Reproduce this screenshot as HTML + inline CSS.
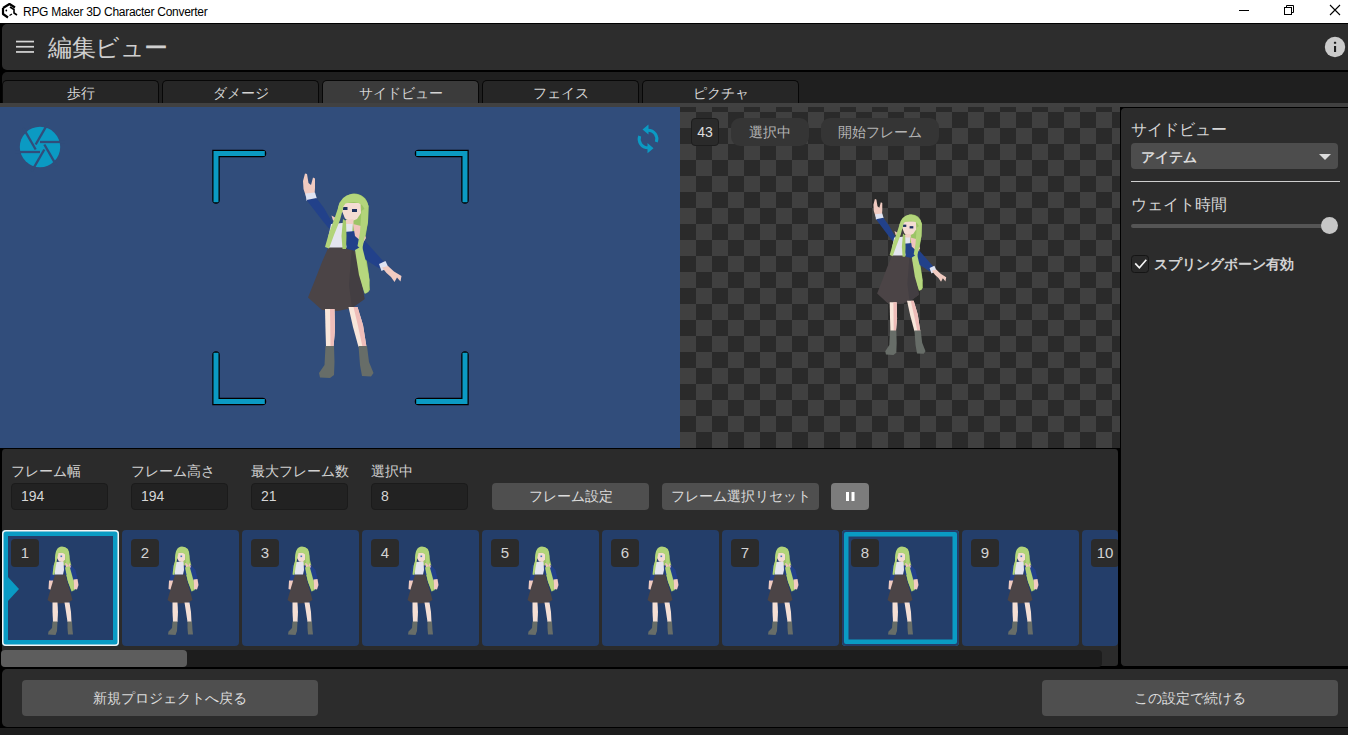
<!DOCTYPE html>
<html><head><meta charset="utf-8">
<style>
*{box-sizing:border-box;margin:0;padding:0}
html,body{width:1348px;height:735px;overflow:hidden;background:#000;font-family:"Liberation Sans",sans-serif;color:#d0d0d0}
.a{position:absolute}
#title{left:0;top:0;width:1348px;height:23px;background:#fff;color:#000;font-size:12px}
#hdr{left:2px;top:24px;width:1360px;height:46px;background:#2d2d2d;border-radius:5px}
#tabbar{left:2px;top:72px;width:1350px;height:31px;background:#1f1f1f;border-radius:5px 0 0 0}
.tab{top:80px;height:23px;width:157px;background:#262626;border:1.5px solid #070707;border-bottom:none;border-radius:5px 5px 0 0;font-size:14px;text-align:center;line-height:24px;color:#d4d4d4}
.tab.on{background:#3b3b3b}
#strip{left:0;top:103px;width:1348px;height:4px;background:#414141}
#prev{left:0;top:107px;width:680px;height:341px;background:#314d7b;overflow:hidden}
#check{left:680px;top:107px;width:440px;height:341px;overflow:hidden;
 background-color:#2a2a2a;
 background-image:linear-gradient(45deg,#404040 25%,transparent 25%,transparent 75%,#404040 75%),linear-gradient(45deg,#404040 25%,transparent 25%,transparent 75%,#404040 75%);
 background-size:32px 32px;background-position:0 -11px,16px 5px}
#rpanel{left:1120px;top:107px;width:240px;height:560px;background:#2c2c2c;border:1.5px solid #000;border-right:none;border-radius:5px}
#fpanel{left:0px;top:448px;width:1119.5px;height:220px;background:#2b2b2b;border:2px solid #000;border-top:1.5px solid #000;border-radius:5px}
#bpanel{left:2px;top:669px;width:1360px;height:58px;background:#2c2c2c;border-radius:5px}
.lbl{font-size:14px;color:#d2d2d2}
.inp{height:27px;width:97px;background:#222;border:1px solid #1b1b1b;border-radius:4px;font-size:14px;padding-left:9px;line-height:25px;color:#d6d6d6}
.btn{background:#4f4f4f;border-radius:4px;font-size:14px;text-align:center;color:#dcdcdc}
.th{top:0;width:117px;height:116px;background:#243e6a;border-radius:4px;overflow:hidden}
.badge{left:9px;top:9px;width:28px;height:28px;background:#2b2b2b;border-radius:4px;font-size:15px;text-align:center;line-height:28px;color:#d4d4d4}
</style></head><body>
<svg width="0" height="0" style="position:absolute"><defs><symbol id="poseB" viewBox="0 0 117 116">
  <path d="M54 22 Q59 15 66 19 L68 30 L70.5 40 L72.5 50 L73 60 L69.5 61.5 L65.5 50 L62.5 38 Z" fill="#9cc466"/>
  <path d="M50 35 L55 34 L55 48 L52.5 51.5 L48 51 L48.5 44 Z" fill="#22418a"/>
  <path d="M47 50.5 L51.5 50.5 L51.5 56 L49.5 60 L46.5 59 Z" fill="#f1cbc1"/>
  <path d="M61 35.5 L69 35 L73.5 40 L75.5 49.5 L72 51 L69 45 L63 45 Z" fill="#22418a"/>
  <path d="M71.5 49.5 L75.5 49 L76.5 55 L75 59.5 L72 59 Z" fill="#f1cbc1"/>
  <path d="M53 44.5 L63 44.5 L66.5 56 L70.5 70 L65 73 L55 73.5 L49 72.5 L45.5 70 L49.5 56 Z" fill="#4b4446"/>
  <path d="M50.5 72.5 L55.5 72.5 L56 82 L55.5 92 L51 92 L50.5 82 Z" fill="#f5dfd4"/>
  <path d="M62.5 72.5 L67.5 72.5 L69 82 L69.5 92 L65.5 92 L64 82 Z" fill="#f5dfd4"/>
  <path d="M50.5 91.5 L55.5 91.5 L55 101 L53.5 105 L46 104.5 L46.5 101.5 L50 98 Z" fill="#676d68"/>
  <path d="M65.5 91.5 L70 91.5 L70.5 100 L71 104.5 L66 104.5 L65.5 98 Z" fill="#676d68"/>
  <path d="M53 32 L61.5 31.5 L62 40 L61 44.5 L53 44.5 L52 39 Z" fill="#e4e5ef"/>
  <path d="M63 33 L68 33.5 L69 37.5 L64 37.5 Z" fill="#f0c4bc"/>
  <path d="M55 23 L63 22.5 L63 29.5 L60.5 32 L57 31.5 L55 28 Z" fill="#f4dcd3"/>
  <rect x="58.5" y="25.5" width="1.6" height="1.6" fill="#3d7ac0"/>
  <path d="M53 31 Q52.5 16.5 60 16.5 Q67.5 17 67.5 26 L67 36 L64 33 L63 24.5 Q60 21.5 56.5 23 L55 30 L53.5 38 L52.5 45 L50.5 44.5 L51.5 36 Z" fill="#b2d47a"/>
  <path d="M63 37.5 L67.5 36 L70.5 47 L72 58 L70 61.5 L66 52 Z" fill="#b2d47a"/>
</symbol></defs></svg>
<div id="title" class="a">
  <svg class="a" style="left:0;top:0" width="22" height="22" viewBox="0 0 22 22">
  <path d="M3 8 L9.5 4 L15 7.5 M3 8 L3 14 L8 17.5" fill="none" stroke="#000" stroke-width="2.2" stroke-linejoin="round"/>
  <path d="M10 7 L14 9.5 L14 13 L17 15" fill="none" stroke="#000" stroke-width="1.6"/>
  <path d="M9.5 15.5 L12 14" fill="none" stroke="#000" stroke-width="1.2"/>
  <circle cx="6.3" cy="10.5" r="0.9" fill="#000"/>
</svg>
<div class="a" style="left:23px;top:5px;line-height:14px;letter-spacing:-0.28px">RPG Maker 3D Character Converter</div>
<svg class="a" style="left:1230px;top:0" width="118" height="22">
  <rect x="9" y="10" width="10" height="1" fill="#000"/>
  <rect x="54.5" y="7.5" width="7" height="7" fill="none" stroke="#000" stroke-width="1"/>
  <path d="M56.5 7.5 V5.5 H63.5 V12.5 H61.5" fill="none" stroke="#000" stroke-width="1"/>
  <path d="M100 5 L110 15 M110 5 L100 15" stroke="#000" stroke-width="1.1"/>
</svg>
</div>
<div id="hdr" class="a"></div>
<div class="a" style="left:48px;top:34px;font-size:24px;line-height:28px;color:#cfcfcf;letter-spacing:-0.5px">編集ビュー</div>
<svg class="a" style="left:14px;top:38px" width="24" height="18">
  <rect x="2" y="2.7" width="18" height="1.7" fill="#d6d6d6"/>
  <rect x="2" y="7.9" width="18" height="1.7" fill="#d6d6d6"/>
  <rect x="2" y="13.1" width="18" height="1.7" fill="#d6d6d6"/>
</svg>
<svg class="a" style="left:1323px;top:35px" width="24" height="24" viewBox="0 0 24 24">
  <circle cx="12" cy="12" r="10.2" fill="#cbcbcb"/>
  <rect x="11" y="11" width="2.1" height="6" fill="#1e1e1e"/>
  <rect x="10.9" y="6.8" width="2.3" height="2" rx="0.6" fill="#1e1e1e"/>
</svg>
<div id="tabbar" class="a"></div>
<div class="a tab" style="left:2px">歩行</div>
<div class="a tab" style="left:162px">ダメージ</div>
<div class="a tab on" style="left:322px">サイドビュー</div>
<div class="a tab" style="left:482px">フェイス</div>
<div class="a tab" style="left:642px">ピクチャ</div>
<div id="strip" class="a"></div>
<div id="prev" class="a">
<svg class="a" style="left:0;top:0" width="680" height="341" viewBox="0 107 680 341">
  <g>
    <circle cx="40" cy="147" r="20.2" fill="#0b9ac3"/>
    <g stroke="#314d7b" stroke-width="2.3" id="ap"><line x1="40.00" y1="152.00" x2="15.00" y2="152.00"/><line x1="35.67" y1="149.50" x2="23.17" y2="127.85"/><line x1="35.67" y1="144.50" x2="48.17" y2="122.85"/><line x1="40.00" y1="142.00" x2="65.00" y2="142.00"/><line x1="44.33" y1="144.50" x2="56.83" y2="166.15"/><line x1="44.33" y1="149.50" x2="31.83" y2="171.15"/></g>
  </g>
  <g fill="none" stroke="#0b9ac3" stroke-width="3">
    <path d="M648 130.2 A8.8 8.8 0 0 1 656.3 142"/>
    <path d="M648 147.8 A8.8 8.8 0 0 1 639.7 136"/>
  </g>
  <path d="M648.5 124.5 L648.5 134.5 L642.5 129.5Z M647.5 143 L647.5 153.3 L653.5 148.2Z" fill="#0b9ac3"/>
  <g id="poseA">
  <!-- back long hair -->
  <path d="M340 206 Q343 195 354 193.5 Q366 194 368.5 206 L368 222 L365 240 L366 256 L369 275 L370 290 L365.5 294 L360 280 L355 262 L351 246 L352 232 Z" fill="#9cc466"/>
  <!-- raised arm -->
  <path d="M303 181 L305 173.5 L307 174 L308.5 183 L311 185 L313 177.5 L315 178.5 L315 188 L314.5 195 L306 196.5 L303.5 189 Z" fill="#f1cbc1"/>
  <path d="M305.5 193.5 L315 192.5 L317 199 L306.5 201 Z" fill="#dfe3f2"/>
  <path d="M306.5 200 L316.5 198 L324 208 L332 222 L336 228 L328.5 228 L322 220 Z" fill="#22418a"/>
  <!-- right arm -->
  <path d="M346 231 L357 232 L384 262 L379.5 268.5 L350 250 Z" fill="#22418a"/>
  <path d="M379 264 L385.5 261 L388.5 267.5 L381.5 271 Z" fill="#dfe3f2"/>
  <path d="M382 267.5 L388 266 L394 271.5 L401.5 276 L400.5 281.5 L397 277.5 L394.5 282 L391 277 L386.5 273 Z" fill="#f1cbc1"/>
  <!-- skirt -->
  <path d="M329 246 L354 246 L360 270 L364.5 299 L352 308 L338 311 L322 310 L308 297.5 L315 280 L322 262 Z" fill="#4b4446"/>
  <path d="M352 246 L359 270 L364.5 299 L352 308 L349 285 Z" fill="#433e42"/>
  <!-- legs -->
  <path d="M325 309 L334.5 309 L335 330 L333.5 347 L326 347 L325.5 330 Z" fill="#f8e6da"/>
  <path d="M330 309 L334.5 309 L335 330 L333.5 347 L330.5 347 Z" fill="#efbdb9"/>
  <path d="M348.5 307 L357.5 307 L363 325 L366.5 347 L358.5 347 L353 327 Z" fill="#f8e6da"/>
  <path d="M353.5 307 L357.5 307 L363 325 L366.5 347 L362.5 347 L358 326 Z" fill="#efbdb9"/>
  <!-- boots -->
  <path d="M325.5 346 L334 346 L334.5 362 L334 375 L330 378 L320 377.5 L319 373 L324.5 365 Z" fill="#676d68"/>
  <path d="M358.5 346 L367 346 L369 362 L373.5 373 L371 376.5 L362 376 L360 365 Z" fill="#676d68"/>
  <!-- torso -->
  <path d="M331 224 L353 222 L352 236 L347.5 247.5 L329 247.5 L328.5 236 Z" fill="#e4e5ef"/>
  <path d="M343.5 232 L356 231 L360 242 L356 251 L347 249 Z" fill="#22418a"/>
  <path d="M353 224 L361 226 L366 238 L363 243 L355 236 Z" fill="#f0c4bc"/>
  <path d="M331.5 215.5 L336 218 L337.5 221.5 L333 220.5 Z" fill="#f0c4bc"/>
  <!-- face -->
  <path d="M342 203 L360.5 203 L361 213 L357 219 L351 221.5 L345 218.5 L342 211 Z" fill="#f4dcd3"/>
  <path d="M345.5 220 L353.5 219 L353.5 224 L346 224 Z" fill="#f0cfc6"/>
  <rect x="343" y="207" width="4.5" height="3" fill="#1e3160"/>
  <rect x="352" y="209" width="5" height="3" fill="#1e3160"/>
  <!-- front hair -->
  <path d="M338 208 Q340 196 352 193.8 Q365 194 368.5 206 L366 211 L362 205 Q356 200.5 350 202.5 L345.5 203.5 L341.5 209 Z" fill="#b4d67c"/>
  <path d="M339 205 L343.5 207 L340 220 L334 235 L329 248.5 L325 247 L329 233 L335 217 Z" fill="#b2d47a"/>
  <path d="M343 219 L346 221 L346.5 236 L346 249 L342.5 249 L341.5 236 Z" fill="#a6cb6e"/>
  <path d="M361.5 211 L368.5 206 L368 222 L364.5 238 L362 250 L357.5 246 L360 232 Z" fill="#b2d47a"/>
  <path d="M355 250 L362 246 L366 262 L369.5 280 L368.5 292 L364.5 293.5 L359 275 Z" fill="#b6d77e"/>
</g>
  <g id="brk" fill="none" stroke-linecap="round" stroke-linejoin="miter">
    <path d="M216 200 V153.5 H262.5 M465 200 V153.5 H418.5 M216 355 V401.5 H262.5 M465 355 V401.5 H418.5" stroke="#000" stroke-width="7.5"/>
    <path d="M216 202.3 V153.5 H264.8 M465 202.3 V153.5 H416.2 M216 352.7 V401.5 H264.8 M465 352.7 V401.5 H416.2" stroke="#0b9ac3" stroke-width="5" stroke-linecap="butt"/>
  </g>
</svg>
</div>
<div id="check" class="a">
  <svg class="a" style="left:0;top:0" width="440" height="341" viewBox="680 107 440 341"><use href="#poseA" transform="translate(649.5 66.9) scale(0.739 0.762)"/></svg>
  <div class="a" style="left:11px;top:11px;width:28px;height:28px;background:#2a2a2a;border:1px solid #1d1d1d;border-radius:4px;font-size:14px;line-height:26px;text-align:center;color:#dedede">43</div>
  <div class="a" style="left:51px;top:11px;width:78px;height:28px;background:#353535;border-radius:9px;font-size:14px;line-height:28px;text-align:center;color:#b4b4b4">選択中</div>
  <div class="a" style="left:141px;top:11px;width:118px;height:28px;background:#353535;border-radius:9px;font-size:14px;line-height:28px;text-align:center;color:#b4b4b4">開始フレーム</div>
</div>
<div id="rpanel" class="a"></div>
<div class="a" style="left:1131px;top:120px;font-size:16px;line-height:20px;color:#d6d6d6">サイドビュー</div>
<div class="a" style="left:1131px;top:143px;width:207px;height:26px;background:#4d4d4d;border-radius:4px"></div>
<div class="a" style="left:1141px;top:147px;font-size:14px;line-height:20px;color:#dadada;font-weight:bold">アイテム</div>
<svg class="a" style="left:1318px;top:153px" width="14" height="8"><path d="M1 1 H13 L7 7Z" fill="#dcdcdc"/></svg>
<div class="a" style="left:1131px;top:181px;width:209px;height:1px;background:#cfcfcf"></div>
<div class="a" style="left:1131px;top:195px;font-size:16px;line-height:20px;color:#d6d6d6">ウェイト時間</div>
<div class="a" style="left:1131px;top:224px;width:200px;height:4px;background:#555;border-radius:2px"></div>
<div class="a" style="left:1321px;top:217px;width:17px;height:17px;background:#c6c6c6;border-radius:50%"></div>
<div class="a" style="left:1131px;top:255px;width:18px;height:18px;background:#292929;border:1.5px solid #151515;border-radius:3.5px"></div>
<svg class="a" style="left:1131px;top:255px" width="18" height="18"><path d="M4.2 8.3 L8.4 12.8 L15.3 4.8" fill="none" stroke="#f4f4f4" stroke-width="1.7"/></svg>
<div class="a" style="left:1154px;top:254px;font-size:14px;line-height:20px;color:#d2d2d2;font-weight:bold">スプリングボーン有効</div>
<div id="fpanel" class="a"></div>
<div class="a lbl" style="left:11px;top:461px;line-height:20px">フレーム幅</div>
<div class="a lbl" style="left:131px;top:461px;line-height:20px">フレーム高さ</div>
<div class="a lbl" style="left:251px;top:461px;line-height:20px">最大フレーム数</div>
<div class="a lbl" style="left:371px;top:461px;line-height:20px">選択中</div>
<div class="a inp" style="left:11px;top:483px">194</div>
<div class="a inp" style="left:131px;top:483px">194</div>
<div class="a inp" style="left:251px;top:483px">21</div>
<div class="a inp" style="left:371px;top:483px">8</div>
<div class="a btn" style="left:492px;top:483px;width:157px;height:27px;line-height:27px">フレーム設定</div>
<div class="a btn" style="left:662px;top:483px;width:157px;height:27px;line-height:27px">フレーム選択リセット</div>
<div class="a btn" style="left:831px;top:483px;width:38px;height:27px;background:#7c7c7c"><svg width="38" height="27"><rect x="15" y="9" width="3" height="9" fill="#fff"/><rect x="20.5" y="9" width="3" height="9" fill="#fff"/></svg></div>
<div class="a" style="left:2px;top:530px;width:1116px;height:117px;overflow:hidden">
<div class="a" style="left:-2px;top:0;width:1200px;height:117px">
<div class="a th" style="left:2px;width:117px;box-shadow:inset 0 0 0 1.5px #f4f4f4,inset 0 0 0 6px #0a9bc4;"><svg class="a" style="left:0;top:0" width="117" height="116"><use href="#poseB"/></svg><div class="a badge">1</div><svg class="a" style="left:5px;top:46px" width="14" height="26"><path d="M0 0 L12 13 L0 26Z" fill="#0a9bc4"/></svg></div>
<div class="a th" style="left:122px;width:117px;"><svg class="a" style="left:0;top:0" width="117" height="116"><use href="#poseB"/></svg><div class="a badge">2</div></div>
<div class="a th" style="left:242px;width:117px;"><svg class="a" style="left:0;top:0" width="117" height="116"><use href="#poseB"/></svg><div class="a badge">3</div></div>
<div class="a th" style="left:362px;width:117px;"><svg class="a" style="left:0;top:0" width="117" height="116"><use href="#poseB"/></svg><div class="a badge">4</div></div>
<div class="a th" style="left:482px;width:117px;"><svg class="a" style="left:0;top:0" width="117" height="116"><use href="#poseB"/></svg><div class="a badge">5</div></div>
<div class="a th" style="left:602px;width:117px;"><svg class="a" style="left:0;top:0" width="117" height="116"><use href="#poseB"/></svg><div class="a badge">6</div></div>
<div class="a th" style="left:722px;width:117px;"><svg class="a" style="left:0;top:0" width="117" height="116"><use href="#poseB"/></svg><div class="a badge">7</div></div>
<div class="a th" style="left:842px;width:117px;box-shadow:inset 0 0 0 2px #243e6a,inset 0 0 0 6.5px #0a9bc4;"><svg class="a" style="left:0;top:0" width="117" height="116"><use href="#poseB"/></svg><div class="a badge">8</div></div>
<div class="a th" style="left:962px;width:117px;"><svg class="a" style="left:0;top:0" width="117" height="116"><use href="#poseB"/></svg><div class="a badge">9</div></div>
<div class="a th" style="left:1082px;width:36px;"><svg class="a" style="left:0;top:0" width="117" height="116"><use href="#poseB"/></svg><div class="a badge">10</div></div>
</div></div>
<div class="a" style="left:1px;top:649.5px;width:1101px;height:17px;background:#1d1d1d;border-radius:4px"></div>
<div class="a" style="left:1px;top:649.5px;width:186px;height:17px;background:#5d5d5d;border-radius:4px"></div>
<div class="a" style="left:0;top:728px;width:1348px;height:7px;background:#1c1c1c"></div>
<div id="bpanel" class="a"></div>
<div class="a btn" style="left:22px;top:680px;width:296px;height:36px;line-height:36px;font-size:14px">新規プロジェクトへ戻る</div>
<div class="a btn" style="left:1042px;top:680px;width:296px;height:36px;line-height:36px;font-size:14px">この設定で続ける</div>
</body></html>
